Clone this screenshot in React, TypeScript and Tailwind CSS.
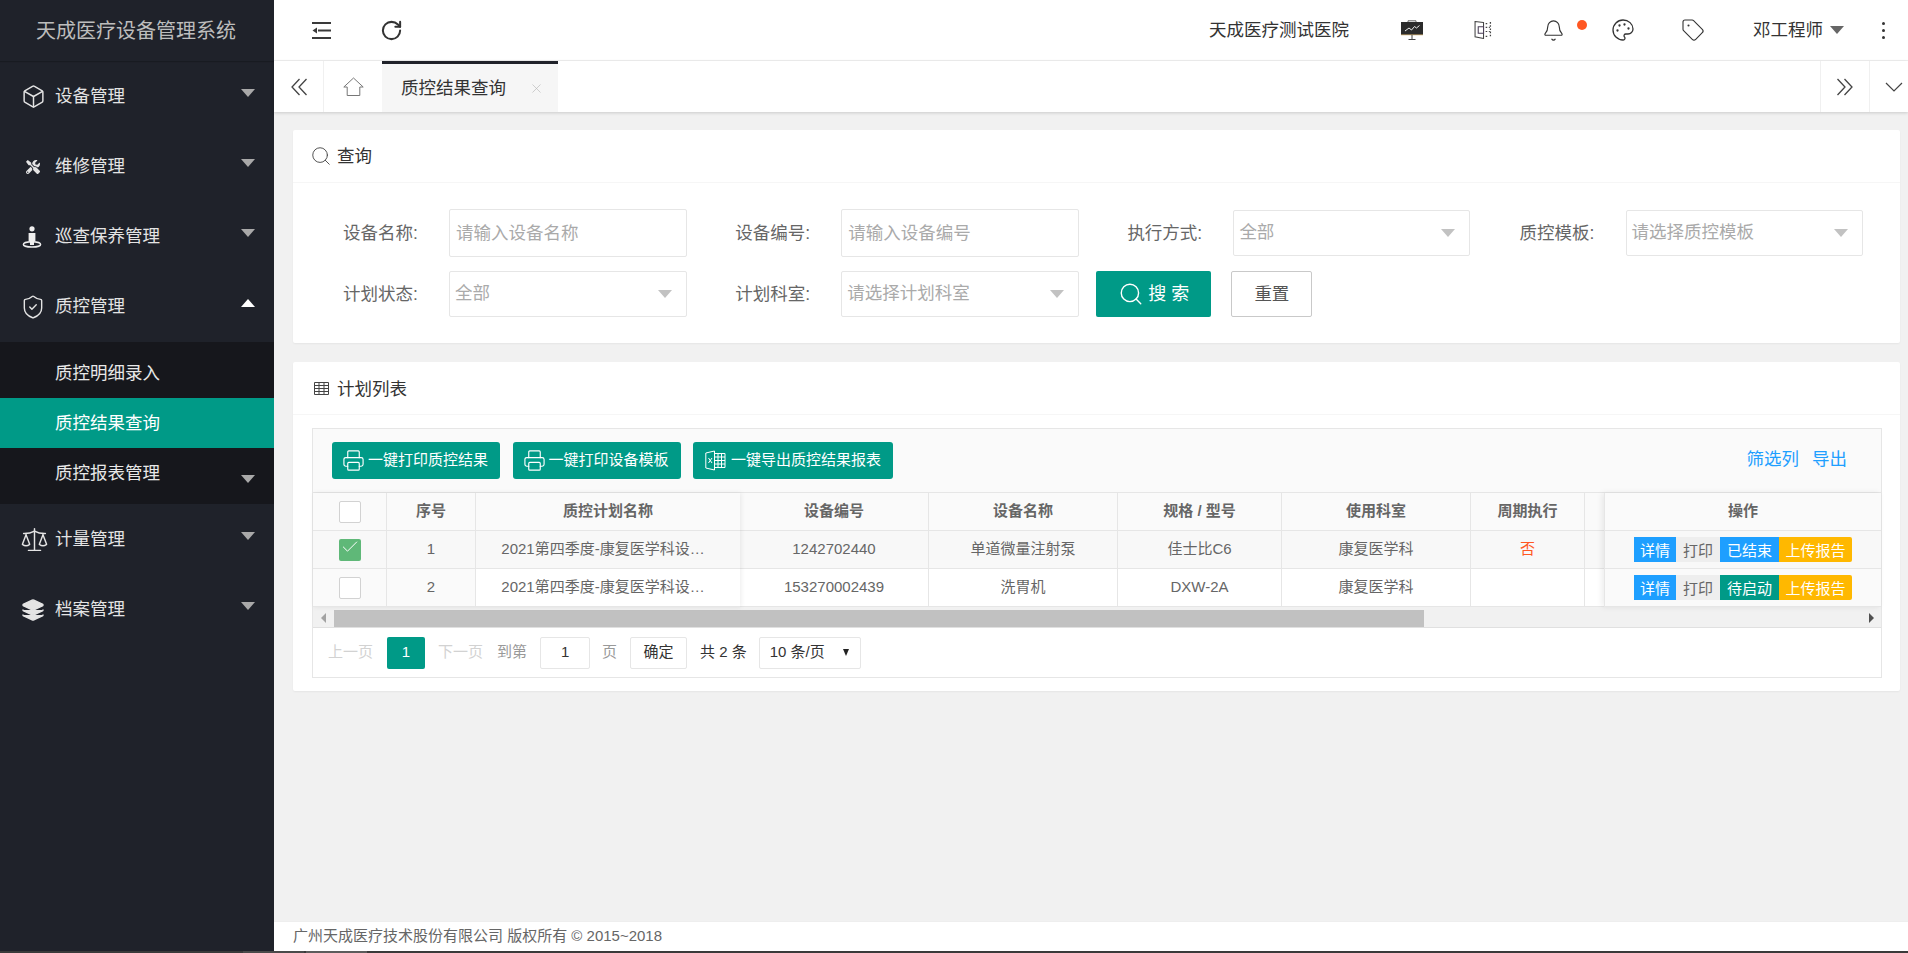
import { ReactNode } from "react";
import { Bell, Box, Check, Layers, Palette, Printer, RotateCw, Scale, Search, ShieldCheck, Tag, X } from "lucide-react";
import { FaTools } from "react-icons/fa";

const Caret = ({ up, color = "#a9a9a9" }: { up?: boolean; color?: string }) => (
  <span
    className={up ? "h-0 w-0 border-x-[7px] border-b-[8px] border-x-transparent" : "h-0 w-0 border-x-[7px] border-t-[8px] border-x-transparent"}
    style={up ? { borderBottomColor: color } : { borderTopColor: color }}
  />
);

const PersonIcon = () => (
  <svg width="20" height="22" viewBox="0 0 20 22" fill="none">
    <circle cx="10" cy="2.8" r="2.6" fill="#eee" />
    <path d="M6.6 7h6.8v8.5h-1.4V19H8v-3.5H6.6z" fill="#eee" />
    <ellipse cx="10" cy="18.4" rx="8.6" ry="2.6" stroke="#eee" strokeWidth="1.5" />
  </svg>
);

function NavItem({ icon, label, open }: { icon: ReactNode; label: string; open?: boolean }) {
  return (
    <div className="flex h-[70px] items-center justify-between pl-[22px] pr-[19px] text-[17.5px] text-[#e4e4e4]">
      <div className="flex items-center pt-[1px]">
        <span className="flex w-[33px] items-center">{icon}</span>
        <span>{label}</span>
      </div>
      <span className="mb-[7px] flex">{open ? <Caret up color="#ffffff" /> : <Caret />}</span>
    </div>
  );
}

function Sidebar() {
  return (
    <aside className="flex w-[274px] shrink-0 flex-col bg-[#1f222a]">
      <div className="flex h-[61px] items-center justify-center pr-[2px] text-[20px] text-[#bdbdbd] shadow-[0_1px_1px_rgba(0,0,0,0.2)]">
        天成医疗设备管理系统
      </div>
      <NavItem icon={<Box size={25} strokeWidth={1.4} className="-ml-[1px] text-[#e4e4e4]" />} label="设备管理" />
      <NavItem icon={<FaTools size={14} className="ml-[4px] text-[#e4e4e4]" />} label="维修管理" />
      <NavItem icon={<PersonIcon />} label="巡查保养管理" />
      <NavItem icon={<ShieldCheck size={26} strokeWidth={1.3} className="-ml-[2px] text-[#e4e4e4]" />} label="质控管理" open />
      <div className="mt-px flex h-[162px] flex-col bg-[#16171c] py-[6px] text-[17.5px]">
        <div className="flex h-[50px] items-center pl-[55px] text-[#e8e8e8]">质控明细录入</div>
        <div className="flex h-[50px] items-center bg-[#009a87] pl-[55px] text-white">质控结果查询</div>
        <div className="flex h-[50px] items-center justify-between pl-[55px] pr-[19px] text-[#e8e8e8]">
          <span>质控报表管理</span>
          <span className="mt-[12px] flex">
            <Caret />
          </span>
        </div>
      </div>
      <NavItem icon={<Scale size={29} strokeWidth={1.2} className="-ml-[2px] text-[#e4e4e4]" />} label="计量管理" />
      <NavItem icon={<Layers size={24} fill="#e4e4e4" strokeWidth={1.4} className="-ml-[1px] text-[#e4e4e4]" />} label="档案管理" />
    </aside>
  );
}

const OutdentIcon = () => (
  <svg width="19" height="17" viewBox="0 0 19 17" fill="#3a3a3a">
    <rect x="0" y="0" width="19" height="2" />
    <rect x="0" y="15" width="19" height="2" />
    <rect x="6" y="7.5" width="13" height="2" />
    <path d="M0.5 8.5 5 5.5v6z" />
  </svg>
);

const BoardIcon = () => (
  <svg width="22" height="20" viewBox="0 0 22 20" fill="none">
    <path d="M7 2.5V.8h8v1.7" stroke="#666" strokeWidth="1" />
    <rect x="0" y="2" width="22" height="13" fill="#2b2b2b" />
    <path d="M0 14.8h22" stroke="#c9a76a" strokeWidth="0.8" />
    <path d="M4 11l4-3 2.5 2 3-3.5 2 1.5 3-2.5" stroke="#eee" strokeWidth="1" />
    <path d="M11 15v4.5M7.5 19.5h7" stroke="#444" strokeWidth="1" />
  </svg>
);

const BookIcon = () => (
  <svg width="18" height="18" viewBox="0 0 17 17" fill="none">
    <path d="M9 1.5 1 0.5v14.5l8 1.5z" stroke="#444" strokeWidth="1" />
    <path d="M4 5.5h5v6H4z" stroke="#4b3f57" strokeWidth="1" />
    <path d="M11 2.5h2M11 14.5h2M15.5 1v15" stroke="#444" strokeWidth="1.2" strokeDasharray="1.5 1.5" />
    <path d="M11 6h4M11 10h4" stroke="#444" strokeWidth="1" strokeDasharray="1.5 1.5" />
  </svg>
);

const DoubleChevron = ({ right }: { right?: boolean }) => (
  <svg width="18" height="18" viewBox="0 0 18 18" fill="none" stroke="#444" strokeWidth="1.3">
    <path d={right ? "M1.5 1l7.5 8-7.5 8M8.5 1l7.5 8-7.5 8" : "M16.5 1 9 9l7.5 8M9.5 1 2 9l7.5 8"} />
  </svg>
);

const HomeOutline = () => (
  <svg width="21" height="19" viewBox="0 0 21 19" fill="none" stroke="#777" strokeWidth="1">
    <path d="M10.5 1 .8 10h3.4v8.5h12.6V10h3.4z" />
  </svg>
);

function TopBar() {
  return (
    <header className="flex h-[61px] shrink-0 items-center border-b border-[#f0f0f0] bg-white text-[17.5px] text-[#333]">
      <span className="ml-[38px] flex">
        <OutdentIcon />
      </span>
      <RotateCw size={23} strokeWidth={2.1} className="ml-[49px] text-[#333]" />
      <span className="ml-auto mr-[27px]">天成医疗测试医院</span>
      <span className="flex w-[72px] justify-center">
        <BoardIcon />
      </span>
      <span className="flex w-[70px] justify-center">
        <BookIcon />
      </span>
      <span className="relative flex w-[70px] justify-center">
        <Bell size={23} strokeWidth={1.2} className="text-[#333]" />
        <span className="absolute left-[59px] top-[1px] h-[10px] w-[10px] rounded-full bg-[#ff5722]" />
      </span>
      <span className="flex w-[70px] justify-center">
        <Palette size={24} strokeWidth={1.3} className="text-[#333]" />
      </span>
      <span className="flex w-[70px] justify-center">
        <Tag size={24} strokeWidth={1.1} className="text-[#333]" />
      </span>
      <span className="ml-[25px]">邓工程师</span>
      <span className="ml-[7px] flex">
        <Caret color="#666666" />
      </span>
      <span className="ml-[38px] mr-[23px] flex flex-col gap-[4px]">
        <i className="h-[3px] w-[3px] rounded-full bg-[#333]" />
        <i className="h-[3px] w-[3px] rounded-full bg-[#333]" />
        <i className="h-[3px] w-[3px] rounded-full bg-[#333]" />
      </span>
    </header>
  );
}

function TabBar() {
  return (
    <div className="relative z-10 flex h-[51px] shrink-0 bg-white shadow-[0_1px_3px_rgba(0,0,0,0.16)]">
      <div className="flex w-[50px] items-center justify-center border-r border-[#f0f0f0]">
        <DoubleChevron />
      </div>
      <div className="flex w-[58px] items-center justify-center">
        <HomeOutline />
      </div>
      <div className="flex w-[176px] items-center border-t-[3px] border-[#20222a] bg-[#f6f6f6] pl-[19px] text-[17.5px] text-[#333]">
        <span>质控结果查询</span>
        <X size={15} strokeWidth={1} className="ml-[23px] text-[#b5b5b5]" />
      </div>
      <div className="ml-auto flex w-[50px] items-center justify-center border-x border-[#f0f0f0]">
        <DoubleChevron right />
      </div>
      <div className="flex w-[38px] items-center justify-center pl-[10px]">
        <svg width="18" height="10" viewBox="0 0 18 10" fill="none" stroke="#444" strokeWidth="1.2">
          <path d="M1 1l8 8 8-8" />
        </svg>
      </div>
    </div>
  );
}

function Field({ label, children }: { label: string; children: ReactNode }) {
  return (
    <div className="flex w-[392.2px] shrink-0 items-center">
      <label className="w-[106px] shrink-0 text-[17.5px] text-[#666]">{label}</label>
      {children}
    </div>
  );
}

function TextBox({ placeholder }: { placeholder: string }) {
  return (
    <input
      placeholder={placeholder}
      className="h-[48px] w-[238px] rounded-[2px] border border-[#e6e6e6] bg-white pl-[6px] text-[17.5px] outline-none placeholder:text-[#aaa]"
    />
  );
}

function SelectBox({ text, small }: { text: string; small?: boolean }) {
  return (
    <div className={small ? "flex h-[46px] w-[237px] items-center justify-between rounded-[2px] border border-[#e6e6e6] pl-[5px] pr-[14px] text-[17.5px] text-[#aaa]" : "flex h-[46px] w-[238px] items-center justify-between rounded-[2px] border border-[#e6e6e6] pl-[5px] pr-[14px] text-[17.5px] text-[#aaa]"}>
      <span className="mb-[1px]">{text}</span>
      <Caret color="#c2c2c2" />
    </div>
  );
}

function QueryCard() {
  return (
    <section className="rounded-[2px] bg-white shadow-[0_1px_2px_rgba(0,0,0,0.05)]">
      <div className="flex h-[53px] items-center border-b border-[#f6f6f6] pl-[17px] text-[17.5px] text-[#333]">
        <Search size={22} strokeWidth={1} className="mr-[5px] text-[#444]" />
        查询
      </div>
      <div className="flex flex-col gap-[14px] pb-[26px] pl-[50px] pt-[26px]">
        <div className="flex h-[48px]">
          <Field label="设备名称:">
            <TextBox placeholder="请输入设备名称" />
          </Field>
          <Field label="设备编号:">
            <TextBox placeholder="请输入设备编号" />
          </Field>
          <Field label="执行方式:">
            <SelectBox text="全部" small />
          </Field>
          <Field label="质控模板:">
            <SelectBox text="请选择质控模板" small />
          </Field>
        </div>
        <div className="flex h-[46px]">
          <Field label="计划状态:">
            <SelectBox text="全部" />
          </Field>
          <Field label="计划科室:">
            <SelectBox text="请选择计划科室" />
          </Field>
          <button className="ml-[-31px] flex h-[46px] w-[115px] items-center justify-center gap-[4px] rounded-[2px] bg-[#009a87] text-[18px] text-white">
            <Search size={26} strokeWidth={1.3} />
            <span>搜 索</span>
          </button>
          <button className="ml-[20px] h-[46px] w-[81px] rounded-[2px] border border-[#c9c9c9] bg-white text-[17.5px] text-[#555]">重置</button>
        </div>
      </div>
    </section>
  );
}

const ExcelIcon = () => (
  <svg width="21" height="21" viewBox="0 0 21 21" fill="none" stroke="#fff" strokeWidth="1">
    <path d="M9.5 1 .8 3v15l8.7 2z" />
    <path d="M3.5 8 7 13M7 8l-3.5 5" />
    <path d="M9.5 3.5H20v14H9.5M13 3.5v14M16.5 3.5v14M9.5 7h10.5M9.5 10.5h10.5M9.5 14h10.5" />
  </svg>
);

const GridIcon = () => (
  <svg width="15" height="13" viewBox="0 0 15 13" fill="none" stroke="#444" strokeWidth="1">
    <path d="M.5.5h14v12H.5zM.5 3.5h14M.5 6.5h14M.5 9.5h14M5 .5v12M10 .5v12" />
  </svg>
);

function ToolButton({ icon, text }: { icon: ReactNode; text: string }) {
  return (
    <button className="flex h-[37px] items-center gap-[5px] rounded-[3px] bg-[#009a87] px-[12px] text-[15px] text-white">
      {icon}
      <span>{text}</span>
    </button>
  );
}

const CheckBox = ({ checked }: { checked?: boolean }) =>
  checked ? (
    <span className="flex h-[22px] w-[22px] items-start justify-center rounded-[2px] bg-[#5fb878]">
      <Check size={20} strokeWidth={1.2} className="-mt-[2px] text-white" />
    </span>
  ) : (
    <span className="h-[22px] w-[22px] rounded-[2px] border border-[#d2d2d2] bg-white" />
  );

const cellBase = "flex h-[38px] items-center justify-center border-b border-r border-[#e6e6e6] text-[15px] text-[#666]";
const headBase = "flex h-[38px] items-center justify-center border-b border-r border-[#e6e6e6] bg-[#fafafa] text-[15px] font-bold text-[#666]";
const planName = "2021第四季度-康复医学科设…";

const rows = [
  { no: "1", code: "1242702440", name: "单道微量注射泵", model: "佳士比C6", dept: "康复医学科", cycle: "否", status: "已结束", statusCls: "bg-[#1e9fff]", checked: true, bg: "bg-[#f8f8f8]", fixedBg: "bg-[#f8f8f8]" },
  { no: "2", code: "153270002439", name: "洗胃机", model: "DXW-2A", dept: "康复医学科", cycle: "", status: "待启动", statusCls: "bg-[#009a87]", checked: false, bg: "bg-white", fixedBg: "bg-[#fafafa]" },
];

function PlanTable() {
  return (
    <div className="flex border-t border-[#e6e6e6]">
      {/* left fixed columns */}
      <div className="relative z-10 w-[427px] shrink-0 shadow-[1px_0_5px_rgba(0,0,0,0.08)]">
        <div className="grid grid-cols-[74px_89px_264px]">
          <div className={headBase}>
            <CheckBox />
          </div>
          <div className={headBase}>序号</div>
          <div className={headBase + " border-r-0"}>质控计划名称</div>
          {rows.map((r) => [
            <div key={r.no + "c"} className={cellBase + " " + r.fixedBg}>
              <CheckBox checked={r.checked} />
            </div>,
            <div key={r.no + "n"} className={cellBase + " " + r.fixedBg}>
              {r.no}
            </div>,
            <div key={r.no + "p"} className={cellBase + " border-r-0 pr-[10px] " + r.bg}>
              {planName}
            </div>,
          ])}
        </div>
      </div>

      {/* scrolling columns */}
      <div className="min-w-0 flex-1 overflow-hidden">
        <div className="grid w-[880px] grid-cols-[189px_189px_164px_189px_114px_35px]">
          {["设备编号", "设备名称", "规格 / 型号", "使用科室", "周期执行", ""].map((h) => (
            <div key={h} className={headBase}>
              {h}
            </div>
          ))}
          {rows.map((r) =>
            [r.code, r.name, r.model, r.dept, r.cycle, ""].map((v, i) => (
              <div key={r.no + i} className={cellBase + " " + r.bg + (v === "否" ? " text-[#ff5722]" : "")}>
                {v}
              </div>
            )),
          )}
        </div>
      </div>

      {/* right fixed column */}
      <div className="relative z-10 w-[277px] shrink-0 border-l border-[#e6e6e6] shadow-[-2px_0_6px_rgba(0,0,0,0.08)]">
        <div className={headBase + " border-r-0"}>操作</div>
        {rows.map((r) => (
          <div key={r.no} className={cellBase + " border-r-0 " + r.fixedBg}>
            <div className="flex h-[25px] text-[15px] leading-[30px] text-white">
              <span className="flex w-[42px] items-center justify-center bg-[#1e9fff] pt-[3px]">详情</span>
              <span className="flex w-[44px] items-center justify-center bg-[#eeeeee] pt-[3px] text-[#666]">打印</span>
              <span className={"flex w-[59px] items-center justify-center pt-[3px] " + r.statusCls}>{r.status}</span>
              <span className="flex w-[73px] items-center justify-center rounded-r-[2px] bg-[#ffb800] pt-[3px]">上传报告</span>
            </div>
          </div>
        ))}
      </div>
    </div>
  );
}

function ScrollBar() {
  return (
    <div className="flex h-[21px] border-b border-[#e0e0e0] bg-[#f1f1f1]">
      <div className="flex w-[21px] items-center justify-center pt-[2px]">
        <span className="h-0 w-0 border-y-[5px] border-r-[5px] border-y-transparent border-r-[#a3a3a3]" />
      </div>
      <div className="mt-[3px] h-[17px] w-[1090px] bg-[#c1c1c1]" />
      <div className="ml-auto flex w-[19px] items-center justify-center pt-[2px]">
        <span className="h-0 w-0 border-y-[5px] border-l-[5px] border-y-transparent border-l-[#505050]" />
      </div>
    </div>
  );
}

function Pager() {
  return (
    <div className="flex h-[49px] items-center bg-white pl-[15px] text-[15px] text-[#333]">
      <span className="text-[#d2d2d2]">上一页</span>
      <span className="ml-[14px] flex h-[32px] w-[38px] items-center justify-center rounded-[2px] bg-[#009a87] text-white">1</span>
      <span className="ml-[13px] text-[#d2d2d2]">下一页</span>
      <span className="ml-[14px] text-[#999]">到第</span>
      <span className="ml-[13px] flex h-[32px] w-[50px] items-center justify-center rounded-[2px] border border-[#e6e6e6]">1</span>
      <span className="ml-[12px] text-[#999]">页</span>
      <span className="ml-[13px] flex h-[32px] w-[57px] items-center justify-center rounded-[2px] border border-[#e6e6e6]">确定</span>
      <span className="ml-[13px]">共 2 条</span>
      <span className="ml-[12px] flex h-[32px] w-[102px] items-center justify-between rounded-[2px] border border-[#e6e6e6] pl-[10px] pr-[11px]">
        10 条/页
        <span className="h-0 w-0 border-x-[3.5px] border-t-[7px] border-x-transparent border-t-[#222]" />
      </span>
    </div>
  );
}

function ListCard() {
  return (
    <section className="mt-[19px] rounded-[2px] bg-white shadow-[0_1px_2px_rgba(0,0,0,0.05)]">
      <div className="flex h-[53px] items-center border-b border-[#f6f6f6] pl-[21px] text-[17.5px] text-[#333]">
        <GridIcon />
        <span className="ml-[8px] pt-[2px]">计划列表</span>
      </div>
      <div className="pb-[13px] pl-[19px] pr-[18px] pt-[13px]">
        <div className="border border-[#e6e6e6]">
          <div className="flex h-[63px] items-center gap-[12.5px] bg-[#fafafa] pl-[19px] pr-[34px]">
            <ToolButton icon={<Printer size={23} strokeWidth={1.2} className="-mx-[2px]" />} text="一键打印质控结果" />
            <ToolButton icon={<Printer size={23} strokeWidth={1.2} className="-mx-[2px]" />} text="一键打印设备模板" />
            <ToolButton icon={<ExcelIcon />} text="一键导出质控结果报表" />
            <div className="mb-[2px] ml-auto flex gap-[13px] text-[17.5px] text-[#1e9fff]">
              <span>筛选列</span>
              <span>导出</span>
            </div>
          </div>
          <PlanTable />
          <ScrollBar />
          <Pager />
        </div>
      </div>
    </section>
  );
}

export default function App() {
  return (
    <div className="flex h-[953px] w-[1908px] flex-col overflow-hidden [font-family:'Liberation_Sans','Noto_Sans_CJK_SC',sans-serif]">
      <div className="flex min-h-0 flex-1">
        <Sidebar />
        <main className="flex min-w-0 flex-1 flex-col bg-[#f1f1f1]">
          <TopBar />
          <TabBar />
          <div className="min-h-0 flex-1 pl-[19px] pr-[8px] pt-[18px]">
            <QueryCard />
            <ListCard />
          </div>
          <footer className="flex h-[30px] shrink-0 items-center border-t border-[#eeeeee] bg-white pl-[19px] text-[15px] text-[#666]">
            广州天成医疗技术股份有限公司 版权所有 © 2015~2018
          </footer>
        </main>
      </div>
      <div className="flex h-[2px] shrink-0 bg-[#3a3a3a]">
        <span className="ml-[243px] w-[61px] bg-[#4a4a4a]" />
        <span className="ml-[2px] w-[61px] bg-[#5c5c5c]" />
      </div>
    </div>
  );
}
